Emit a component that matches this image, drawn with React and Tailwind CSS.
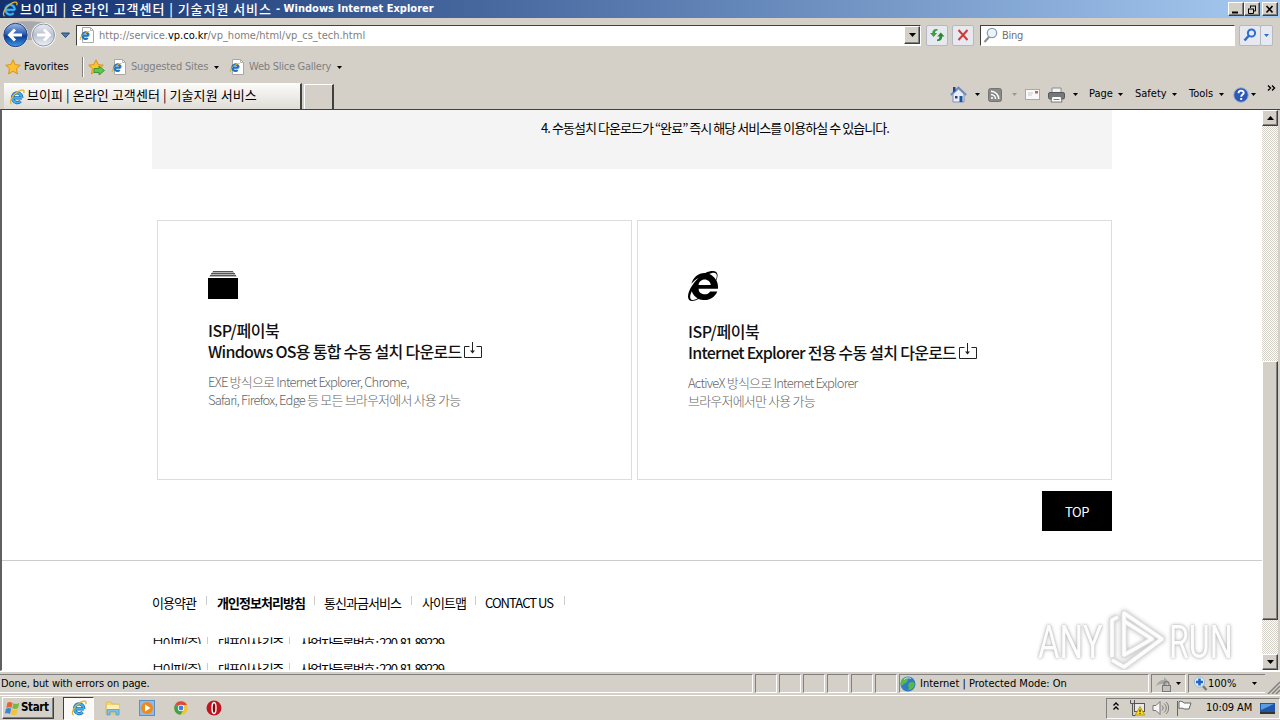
import React from "react";
import { FaInternetExplorer } from "react-icons/fa";

const ui = "font-['DejaVu_Sans_Condensed','DejaVu_Sans','Noto_Sans_CJK_KR',sans-serif]";
const kr = "font-['Noto_Sans_CJK_KR',sans-serif]";
const raised =
  "bg-[#d4d0c8] border border-t-white border-l-white border-r-[#404040] border-b-[#404040] shadow-[inset_-1px_-1px_0_#808080]";

const IeIcon = ({ size = 16 }) => (
  <svg width={size} height={size} viewBox="0 0 16 16" className="shrink-0" fill="none">
    <path d="M12.9 8.9H4.6M12.9 8.9A4.7 4.9 0 1 0 11.6 12.2" stroke="#1265b5" strokeWidth="3.2" />
    <path d="M12.9 8.9H4.6M12.9 8.9A4.7 4.9 0 1 0 11.6 12.2" stroke="#45b4ee" strokeWidth="1.8" />
    <path d="M2.6 15.1C-.6 13.6 3.2 6.6 8 3.3 11 1.2 14.6.2 15 2c.2.8 0 1.400-.4 2.200" stroke="#e3b52c" strokeWidth="1.300" />
  </svg>
);

const IePage = () => (
  <svg width="16" height="16" viewBox="0 0 16 16" className="shrink-0" fill="none">
    <path d="M3.500.5h8l3 3v12h-11z" fill="#fff" stroke="#a9a9a4" />
    <path d="M11.500.5v3h3" stroke="#b5b5ae" />
    <path d="M9.700 8.600H3.500M9.700 8.600A3.200 3.200 0 1 0 8.700 11" stroke="#1d72c2" strokeWidth="2.200" />
    <path d="M1.500 13C0 11.500 4 5.500 10.500 4.500" stroke="#d9ae2a" />
  </svg>
);

const Arrow = ({ className = "text-black" }) => (
  <svg width="5" height="3" viewBox="0 0 5 3" className={`shrink-0 ${className}`}>
    <path d="M0 0h5L2.500 3z" fill="currentColor" />
  </svg>
);

const Star = () => (
  <path
    d="M8 .8l2.200 4.800 5.100.6-3.800 3.500 1 5.200L8 12.300l-4.500 2.600 1-5.200L.7 6.200l5.100-.6z"
    fill="#fdc22f"
    stroke="#d98b12"
    strokeWidth=".9"
  />
);

const WindowButton = ({ children, className = "" }) => (
  <button className={`${raised} flex h-[14px] w-[16px] items-center justify-center ${className}`}>
    <svg width="12" height="11" viewBox="0 0 12 11" fill="none" stroke="#000">
      {children}
    </svg>
  </button>
);

const TitleBar = () => (
  <header className="flex h-[18px] items-center bg-gradient-to-r from-[#14306f] to-[#a6caf0] pr-[2px] pl-[2px] text-white">
    <IeIcon />
    <span className={`${kr} ml-[2px] w-[256px] whitespace-nowrap text-[13px] font-medium tracking-[0.95px] leading-[17px] -mt-px`}>
      브이피 | 온라인 고객센터 | 기술지원 서비스
    </span>
    <span className={`${ui} whitespace-nowrap text-[11px] font-bold tracking-[0.02px]`}>
      - Windows Internet Explorer
    </span>
    <div className="ml-auto flex">
      <WindowButton>
        <path d="M2 8.500h6" strokeWidth="2" />
      </WindowButton>
      <WindowButton>
        <path d="M4 2h6M4.500 2v2M9.500 2v5H8M2 5h6M2.500 5v4.500h5V5" />
      </WindowButton>
      <WindowButton className="ml-[2px]">
        <path d="M2.500 2l6 6.500M8.500 2l-6 6.500" strokeWidth="1.600" />
      </WindowButton>
    </div>
  </header>
);

const NavButtons = () => (
  <svg width="74" height="30" viewBox="0 0 74 30" className="shrink-0">
    <defs>
      <linearGradient id="back" x1="0" y1="0" x2="0" y2="1">
        <stop offset="0" stopColor="#9db9e2" />
        <stop offset=".45" stopColor="#2c5fb5" />
        <stop offset=".55" stopColor="#0b3b96" />
        <stop offset="1" stopColor="#3f9be8" />
      </linearGradient>
      <linearGradient id="forward" x1="0" y1="0" x2="0" y2="1">
        <stop offset="0" stopColor="#e9ecf1" />
        <stop offset=".5" stopColor="#b9c1d0" />
        <stop offset="1" stopColor="#eef1f6" />
      </linearGradient>
    </defs>
    <path d="M13 2C22 1 38 1 45 3L44 20H15z" fill="#a9a9ad" />
    <circle cx="15.500" cy="15" r="12.500" fill="#f4f6fa" />
    <circle cx="15.500" cy="15" r="11.700" fill="url(#back)" stroke="#27427c" />
    <circle cx="43.500" cy="15" r="12.300" fill="#f6f7f9" />
    <circle cx="43.500" cy="15" r="11" fill="url(#forward)" stroke="#8e97a8" />
    <path d="M22 15H10M15 9.500L9.500 15l5.500 5.500" fill="none" stroke="#fff" strokeWidth="3" />
    <path d="M37 15h12M44 9.500l5.500 5.500-5.500 5.500" fill="none" stroke="#fff" strokeWidth="2.800" />
    <path d="M61.500 13h8L65.500 17.500z" fill="#4c7fb0" stroke="#1d4a78" />
  </svg>
);

const toolButton = "flex h-[21px] items-center justify-center rounded-[2px] border border-[#b5b8c0] bg-[#e6e9ef]";

const AddressBar = () => (
  <div className="flex h-[34px] items-center">
    <NavButtons />
    <div className="ml-[2px] flex h-[21px] w-[845px] items-center border border-t-[#404040] border-l-[#404040] border-r-white border-b-white bg-white pl-[2px]">
      <IePage />
      <span className={`${ui} ml-[4px] pt-[2px] whitespace-nowrap text-[11px] text-[#808080]`}>
        http://service.<span className="text-black">vp.co.kr</span>/vp_home/html/vp_cs_tech.html
      </span>
      <button className={`${raised} ml-auto flex h-[18px] w-[16px] items-center justify-center`}>
        <svg width="7" height="4" viewBox="0 0 7 4">
          <path d="M0 0h7L3.500 4z" />
        </svg>
      </button>
    </div>
    <button className={`${toolButton} ml-[5px] w-[22px]`}>
      <svg width="16" height="16" viewBox="0 0 16 16">
        <path d="M8.500 2C5 1.500 3.300 3.500 3.300 6H1l3.600 4L8.200 6H6c0-1.500.8-2.500 2.500-2.500z" fill="#3f9c43" />
        <path d="M8 14c3.500.5 5.200-1.500 5.200-4.500h2.300L11.800 5.500 8.200 9.500h2.300c0 2-.8 3-2.500 3z" fill="#2b8a30" />
      </svg>
    </button>
    <button className={`${toolButton} ml-[4px] w-[22px]`}>
      <svg width="12" height="12" viewBox="0 0 12 12" fill="none" stroke="#cf3b3b" strokeWidth="2">
        <path d="M1.500 1l9 10M10.500 1l-9 10" />
      </svg>
    </button>
    <div className="ml-[6px] flex h-[21px] w-[255px] items-center border border-t-[#404040] border-l-[#404040] border-r-white border-b-white bg-white pl-[2px]">
      <svg width="15" height="16" viewBox="0 0 15 16" fill="none">
        <path d="M6.500 9.500L1.500 15" stroke="#909090" strokeWidth="2.200" />
        <circle cx="9" cy="6" r="4.700" fill="#eaf4fb" stroke="#8f9dab" strokeWidth="1.300" />
      </svg>
      <span className={`${ui} ml-[4px] pt-[2px] text-[11px] tracking-[-0.3px] text-[#707070]`}>Bing</span>
    </div>
    <div className="ml-[4px] flex">
      <button className={`${toolButton} w-[22px]`}>
        <svg width="14" height="14" viewBox="0 0 14 14" fill="none" stroke="#2d6bd0" strokeWidth="2">
          <circle cx="8.500" cy="5" r="3.600" />
          <path d="M6 7.500L1.500 12.500" strokeWidth="2.500" />
        </svg>
      </button>
      <button className={`${toolButton} -ml-px w-[13px]`}>
        <Arrow className="text-[#2d6bd0]" />
      </button>
    </div>
  </div>
);

const FavoritesBar = () => (
  <div className={`${ui} flex h-[30px] items-center pl-[5px] text-[11px] text-[#808080]`}>
    <svg width="16" height="16" viewBox="0 0 16 16">
      <Star />
    </svg>
    <span className="ml-[3px] w-[55px] text-black">Favorites</span>
    <div className="ml-[3px] h-[20px] w-[2px] border-l border-[#808080] bg-white" />
    <svg width="17" height="16" viewBox="0 0 17 16" className="ml-[4px]">
      <Star />
      <path d="M6 9.500h5V7l5.500 4.500L11 16v-2.500H6z" fill="#5fc84c" stroke="#2c8a2a" strokeWidth=".8" />
    </svg>
    <div className="ml-[6px] flex items-center">
      <IePage />
      <span className="ml-[4px] w-[83px] whitespace-nowrap pt-px tracking-[-0.18px]">Suggested Sites</span>
      <Arrow />
    </div>
    <div className="ml-[10px] flex items-center">
      <IePage />
      <span className="ml-[4px] w-[88px] whitespace-nowrap pt-px tracking-[-0.25px]">Web Slice Gallery</span>
      <Arrow />
    </div>
  </div>
);

const TabRow = () => (
  <div className="flex h-[27px] items-end">
    <div className="ml-[4px] flex h-[26px] w-[298px] items-center border-t border-r-2 border-t-white border-r-[#404040] bg-gradient-to-b from-[#fbfbfa] to-[#e0ddd7] pl-[5px]">
      <IeIcon />
      <span className={`${kr} ml-[2px] -mt-[4px] whitespace-nowrap text-[13px] leading-[20px] tracking-[0.08px]`}>
        브이피 | 온라인 고객센터 | 기술지원 서비스
      </span>
    </div>
    <div className="ml-[2px] h-[25px] w-[30px] border-t border-l border-r-2 border-t-white border-l-white border-r-[#404040]" />
    <div className={`${ui} ml-auto flex h-[27px] items-center pb-[2px] text-[11px]`}>
      <svg width="17" height="17" viewBox="0 0 17 17">
        <path d="M3 8v8h11V8L8.500 3z" fill="#e8eefb" stroke="#7d92bd" />
        <path d="M.8 9L8.500 1.500 16.200 9" fill="none" stroke="#7289b9" strokeWidth="1.800" />
        <path d="M3 1h2.500v4L3 6.500z" fill="#1e3f9a" />
        <path d="M9.500 10h3v6h-3z" fill="#1c5794" />
        <path d="M5 10h2.500v2.500H5z" fill="#2b3f74" />
      </svg>
      <span className="ml-[8px]"><Arrow /></span>
      <svg width="14" height="14" viewBox="0 0 14 14" className="ml-[8px]" fill="none" stroke="#fff">
        <rect x=".5" y=".5" width="13" height="13" rx="2" fill="#8a8a88" stroke="#747472" />
        <path d="M3 6.500A4.500 4.500 0 0 1 7.500 11M3 3.200A8 8 0 0 1 10.800 11" strokeWidth="1.500" />
        <circle cx="4" cy="10" r="1.100" fill="#fff" stroke="none" />
      </svg>
      <span className="ml-[10px]"><Arrow className="text-[#9a9690]" /></span>
      <svg width="15" height="11" viewBox="0 0 15 11" className="ml-[8px]">
        <rect x=".5" y=".5" width="14" height="10" fill="#f8f8f8" stroke="#a9a9a9" />
        <path d="M3 4h5M3 6h4" stroke="#c9c9c9" />
        <path d="M10 2h3v2.500h-3z" fill="#d05a5a" />
      </svg>
      <svg width="17" height="16" viewBox="0 0 17 16" className="ml-[8px]">
        <path d="M4 1h9v6H4z" fill="#f4f4f4" stroke="#8a8a8a" />
        <rect x=".5" y="5.500" width="16" height="6.500" rx="1.500" fill="#75777a" stroke="#55575a" />
        <path d="M4 9.500h9l1 5.500H3z" fill="#fff" stroke="#777" />
        <path d="M5.500 12.500h6" stroke="#3b87cc" />
      </svg>
      <span className="ml-[8px]"><Arrow /></span>
      <span className="ml-[11px] w-[29px]">Page</span>
      <Arrow />
      <span className="ml-[12px] w-[37px]">Safety</span>
      <Arrow />
      <span className="ml-[12px] w-[30px]">Tools</span>
      <Arrow />
      <svg width="16" height="16" viewBox="0 0 16 16" className="ml-[9px]">
        <circle cx="8" cy="8" r="7.300" fill="#2d58b8" stroke="#9fb2d8" />
        <path d="M5.500 6.200c0-3.600 5.400-3.300 5.200-.3C10.600 7.500 8.200 7.700 8.200 9.800M8.200 11v2" fill="none" stroke="#fff" strokeWidth="1.900" />
      </svg>
      <span className="ml-[2px]"><Arrow /></span>
      <svg width="9" height="6" viewBox="0 0 9 6" className="mr-[4px] mb-[13px] ml-[11px]" fill="none" stroke="#000" strokeWidth="1.400">
        <path d="M1 .5L3.500 3 1 5.500M5 .5L7.500 3 5 5.500" />
      </svg>
    </div>
  </div>
);

const DownloadIcon = () => (
  <svg width="18" height="17" viewBox="0 0 18 17" className="mt-px ml-[3px]" fill="none" stroke="#222">
    <path d="M5.500 4.500H.5v11h17v-11h-5M8.500 0v11" />
    <path d="M6 8.500h5L8.500 11.500z" fill="#222" stroke="none" />
  </svg>
);

const cards = [
  {
    icon: (
      <svg width="30" height="28" viewBox="0 0 30 28">
        <path d="M5 0h20l4 6H1z" fill="#b5b5b5" />
        <path d="M5 .5h20M3 2.500h24M2 4.500h26" stroke="#555" />
        <path d="M0 7h30v21H0z" />
      </svg>
    ),
    title: ["ISP/페이북", "Windows OS용 통합 수동 설치 다운로드"],
    titleClass: "tracking-[-0.72px]",
    body: ["EXE 방식으로 Internet Explorer, Chrome,", "Safari, Firefox, Edge 등 모든 브라우저에서 사용 가능"],
    iconClass: "mb-[21px]",
  },
  {
    icon: <FaInternetExplorer className="h-[30px] w-[30px]" />,
    title: ["ISP/페이북", "Internet Explorer 전용 수동 설치 다운로드"],
    titleClass: "tracking-[-0.74px]",
    body: ["ActiveX 방식으로 Internet Explorer", "브라우저에서만 사용 가능"],
    iconClass: "mt-px mb-[21px]",
  },
];

const Card = ({ card }) => (
  <div className="flex h-[260px] w-[475px] flex-col border border-[#ddd] pt-[50px] pl-[50px]">
    <div className={`flex h-[28px] items-center ${card.iconClass}`}>{card.icon}</div>
    <h2 className={`whitespace-nowrap text-[16px] leading-[21px] font-medium text-[#111] ${card.titleClass}`}>
      <span className="block tracking-[-0.4px]">{card.title[0]}</span>
      <span className="flex h-[21px]">
        {card.title[1]}
        <DownloadIcon />
      </span>
    </h2>
    <p className="mt-[11px] whitespace-nowrap text-[13px] leading-[18px] font-light tracking-[-0.8px] text-[#666]">
      {card.body[0]}
      <br />
      {card.body[1]}
    </p>
  </div>
);

const Divider = ({ className = "" }) => <i className={`h-[9px] w-px bg-[#ccc] ${className}`} />;

const CompanyLine = ({ className }) => (
  <div className={`flex h-[11px] items-start overflow-hidden text-[13px] leading-[20px] tracking-[-1.4px] whitespace-nowrap ${className}`}>
    <span className="w-[55px]">브이피(주)</span>
    <Divider className="mt-[4px]" />
    <span className="ml-[10px] w-[71px]">대표이사 김준</span>
    <Divider className="mt-[4px]" />
    <span className="ml-[10px]">사업자등록번호 : 220-81-89229</span>
  </div>
);

const Watermark = () => (
  <div className="absolute top-[498px] left-[1036px] flex items-center font-['Roboto',sans-serif] text-[46px] leading-none text-[#fdfdfd] [text-shadow:0_0_3px_#aaa,0_0_5px_#ccc]">
    <span className="w-[68px] pt-[3px]">
      <span className="inline-block origin-left scale-x-[0.72]">ANY</span>
    </span>
    <svg width="60" height="64" viewBox="0 0 60 64" fill="none" strokeLinejoin="round" className="drop-shadow-[0_0_2px_#bbb]">
      <path d="M6 49V12l6-3M18 48V5l38 26-38 28-12-7M18 13v34l28-16z" stroke="#dcdcdc" strokeWidth="6" />
      <path d="M6 49V12l6-3M18 48V5l38 26-38 28-12-7M18 13v34l28-16z" stroke="#fdfdfd" strokeWidth="3.500" />
    </svg>
    <span className="ml-[3px] inline-block origin-left scale-x-[0.7] pt-[3px]">RUN</span>
  </div>
);

const PageContent = () => (
  <main className={`${kr} relative h-[560px] w-[1260px] overflow-hidden bg-white pl-[150px] text-black`}>
    <div className="h-[59px] w-[960px] bg-[#f4f4f4] pt-[9px] pl-[389px] text-[13px] leading-[18px] tracking-[-0.95px] whitespace-nowrap">
      4. 수동설치 다운로드가 “완료” 즉시 해당 서비스를 이용하실 수 있습니다.
    </div>
    <div className="mt-[51px] ml-[5px] flex gap-[5px]">
      {cards.map((card, index) => (
        <Card key={index} card={card} />
      ))}
    </div>
    <button className="mt-[11px] ml-[890px] block h-[40px] w-[70px] bg-black pt-[2px] text-[13px] tracking-[-0.4px] text-white">
      TOP
    </button>
    <div className="mt-[29px] -ml-[150px] h-px bg-[#ccc]" />
    <nav className="mt-[33px] flex h-[18px] items-start text-[13px] leading-[18px] tracking-[-0.95px] whitespace-nowrap">
      <span className="w-[54px]">이용약관</span>
      <Divider className="mt-[2px]" />
      <span className="ml-[10px] w-[97px] font-bold">개인정보처리방침</span>
      <Divider className="mt-[2px]" />
      <span className="ml-[9px] w-[87px]">통신과금서비스</span>
      <Divider className="mt-[2px]" />
      <span className="ml-[10px] w-[53px]">사이트맵</span>
      <Divider className="mt-[2px]" />
      <span className="ml-[9px] w-[79px]">CONTACT US</span>
      <Divider className="mt-[2px]" />
    </nav>
    <CompanyLine className="mt-[21px]" />
    <CompanyLine className="mt-[15px]" />
    <Watermark />
  </main>
);

const ScrollBar = () => (
  <div className="flex w-[16px] flex-col bg-[repeating-conic-gradient(#fff_0_25%,#d4d0c8_0_50%)] bg-[length:2px_2px]">
    <div className={`${raised} flex h-[16px] items-center justify-center`}>
      <svg width="7" height="4" viewBox="0 0 7 4">
        <path d="M0 4h7L3.500 0z" />
      </svg>
    </div>
    <div className={`${raised} mt-[235px] h-[259px]`} />
    <div className={`${raised} mt-auto flex h-[16px] items-center justify-center`}>
      <svg width="7" height="4" viewBox="0 0 7 4">
        <path d="M0 0h7L3.500 4z" />
      </svg>
    </div>
  </div>
);

const sunken = "border border-t-[#808080] border-l-[#808080] border-r-white border-b-white";

const StatusBar = () => (
  <footer className={`${ui} flex h-[24px] items-center gap-[2px] border-t border-white text-[11px]`}>
    <div className={`${sunken} flex h-[19px] w-[753px] shrink-0 items-center border-l-0 pt-px pl-px`}>
      <span className="tracking-[-0.1px]">Done, but with errors on page.</span>
    </div>
    {[1, 2, 3, 4, 5, 6].map((pane) => (
      <div key={pane} className={`${sunken} h-[19px] w-[22px] shrink-0`} />
    ))}
    <div className={`${sunken} flex h-[19px] w-[250px] shrink-0 items-center`}>
      <svg width="16" height="16" viewBox="0 0 16 16">
        <circle cx="8" cy="8" r="7.500" fill="#2f7cc4" />
        <path d="M2 3c3-3 7-2 6 1S5 7 3 9 0 8 1 5zM9 7c3-2 6-1 5.500 2S11 14 9 14s1-3-1-4z" fill="#58b84a" />
        <path d="M4 3.500c2-2 5-2 7-1" stroke="#c9e8ff" fill="none" />
      </svg>
      <span className="ml-[4px] pt-px whitespace-nowrap">Internet | Protected Mode: On</span>
    </div>
    <div className={`${sunken} flex h-[19px] w-[35px] shrink-0 items-center pl-[3px]`}>
      <svg width="17" height="16" viewBox="0 0 17 16">
        <path d="M1 10c2-5 5-6 8-6V1l5 5-5 5V8c-3 0-5 0-8 2z" fill="#aaa8a4" />
        <path d="M9 10V8a2.500 2.500 0 0 1 5 0v2" fill="none" stroke="#777" strokeWidth="1.200" />
        <rect x="7.500" y="9.500" width="8" height="6" fill="#c4c2be" stroke="#777" />
      </svg>
      <span className="ml-[4px]"><Arrow /></span>
    </div>
    <div className={`${sunken} flex h-[19px] w-[77px] shrink-0 items-center border-r-0 pl-[4px]`}>
      <svg width="15" height="15" viewBox="0 0 15 15">
        <path d="M9 9l4.500 5" stroke="#7a7a7a" strokeWidth="2.500" />
        <circle cx="6.500" cy="6" r="5.200" fill="#dcecfb" stroke="#a4b6cc" />
        <path d="M6.500 2.500v7M3 6h7" stroke="#1f66c4" strokeWidth="2.600" />
      </svg>
      <span className="w-[44px] pt-px">100%</span>
      <Arrow />
    </div>
    <svg width="13" height="13" viewBox="0 0 13 13" className="mt-auto mb-px ml-auto shrink-0" stroke="#808080" strokeWidth="1.500">
      <path d="M1 13L13 1M5 13l8-8M9 13l4-4" />
    </svg>
  </footer>
);

const TaskBar = () => (
  <footer className={`${ui} flex h-[25px] items-center border-t border-white pl-[2px] text-[11px]`}>
    <button className={`${raised} flex h-[22px] w-[52px] items-center pl-[2px] font-bold`}>
      <svg width="15" height="15" viewBox="0 0 15 15" className="shrink-0">
        <path d="M2.500 1.500C4.500.5 6 1 7.500 2L6.500 7C5 6 3.500 6 1.300 6.800z" fill="#e8642c" />
        <path d="M8.300 2.300c2 1 4 .8 6-.2L13 7.200c-2 1-4 1-5.700 0z" fill="#79b843" />
        <path d="M1 7.700c2-.9 3.600-.8 5.200.1L5 13C3.500 12-.2 12-.2 13z" fill="#3c86cf" />
        <path d="M7 8.200c2 1 3.800.9 5.700.1L11.500 13.500c-2 .9-4 .8-5.700-.2z" fill="#f3c13a" />
      </svg>
      <span className="ml-[1px] text-[11.5px] tracking-[-0.35px]">Start</span>
    </button>
    <div className="ml-[9px] flex h-[23px] w-[31px] items-center justify-center border border-t-[#404040] border-l-[#404040] border-r-white border-b-white bg-[#fbfaf9]">
      <IeIcon />
    </div>
    <svg width="16" height="16" viewBox="0 0 16 16" className="ml-[11px]">
      <path d="M1 2h5l1 2h7v10H1z" fill="#f1d67c" stroke="#d9b95a" strokeWidth=".8" />
      <path d="M2 5h12v4H2z" fill="#fbeeb6" />
      <path d="M2 15V9.500h12V15h-3v-3H5v3z" fill="#79bfe8" stroke="#5798c6" strokeWidth=".7" />
    </svg>
    <svg width="16" height="16" viewBox="0 0 16 16" className="ml-[18px]">
      <rect x=".5" y=".5" width="15" height="15" fill="#8ebce8" stroke="#5b8fc6" />
      <circle cx="8" cy="8" r="6" fill="#ee8a1c" />
      <path d="M6 4.500l5.500 3.500L6 11.500z" fill="#fff" />
    </svg>
    <svg width="14" height="14" viewBox="0 0 14 14" className="ml-[19px]">
      <circle cx="7" cy="7" r="6.800" fill="#f4c52c" />
      <path d="M7 7L1.100 3.600A6.800 6.800 0 0 1 13 3.900H7z" fill="#dd4a3c" />
      <path d="M7 7L1.100 3.600A6.800 6.800 0 0 0 6.500 13.800L9.500 9z" fill="#41a053" />
      <circle cx="7" cy="7" r="3.200" fill="#fff" />
      <circle cx="7" cy="7" r="2.400" fill="#3f7fe0" />
    </svg>
    <svg width="16" height="16" viewBox="0 0 16 16" className="ml-[18px]">
      <circle cx="8" cy="8" r="7.500" fill="#c0161f" />
      <ellipse cx="8" cy="8" rx="2" ry="5.500" fill="#7d0a10" stroke="#fff" strokeWidth="1.400" />
    </svg>
    <div className={`${sunken} ml-auto flex h-[21px] w-[174px] items-center pl-[6px]`}>
      <svg width="6" height="8" viewBox="0 0 6 8" className="mb-[4px]" fill="none" stroke="#000" strokeWidth="1.300">
        <path d="M.5 3.500L3 1l2.500 2.500M.5 7.500L3 5l2.500 2.500" />
      </svg>
      <svg width="16" height="16" viewBox="0 0 16 16" className="ml-[10px]" fill="none" stroke="#555">
        <path d="M1.500 0v3.500h4V0M3.500 4v11.500h3" />
        <rect x="5.500" y="3.500" width="10" height="8" fill="#e9e9e9" />
        <path d="M11 6.500l4.700 8.500H6.300z" fill="#f8dc25" stroke="#b79a12" />
        <path d="M11 9.500v2.700M11 13v1" stroke="#000" />
      </svg>
      <svg width="17" height="16" viewBox="0 0 17 16" className="ml-[7px]" fill="none" stroke="#777">
        <path d="M1 5.500h3L8 1.500v13L4 10.500H1z" fill="#f6f6f6" />
        <path d="M10 5.500c1.500 1.500 1.500 3.500 0 5M12 3.500c3 2.500 3 6.500 0 9M14 2c3.500 3 3.500 9 0 12" />
      </svg>
      <svg width="16" height="16" viewBox="0 0 16 16" className="ml-[7px]" fill="none" stroke="#666">
        <path d="M1.500 1v15M3 1.500c2-.5 4 0 5 1.500h7l-2 6H8C7 8 5 8 3 8.500z" fill="#fafafa" />
      </svg>
      <span className="ml-[14px] w-[51px] whitespace-nowrap tracking-[-0.1px]">10:09 AM</span>
      <svg width="15" height="13" viewBox="0 0 15 13" className="ml-[3px] shrink-0">
        <path d="M0 1h15v9H0z" fill="#1f56a8" />
        <path d="M1 2h13L1 8z" fill="#5d9be0" />
        <path d="M0 10h15v2H0z" fill="#333" />
      </svg>
    </div>
  </footer>
);

const App = () => {
  return (
    <div className="h-[720px] w-[1280px] overflow-hidden bg-[#d4d0c8] text-black">
      <TitleBar />
      <AddressBar />
      <FavoritesBar />
      <TabRow />
      <div className="flex h-[562px] border-t border-l-2 border-b border-t-[#404040] border-l-[#606060] border-b-white">
        <PageContent />
        <ScrollBar />
      </div>
      <StatusBar />
      <TaskBar />
    </div>
  );
};

export default App;
